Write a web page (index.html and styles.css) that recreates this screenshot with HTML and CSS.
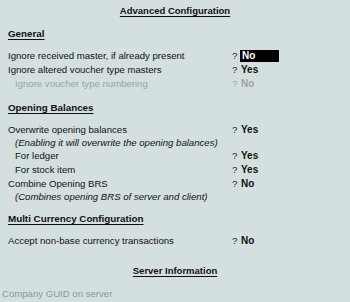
FILE: index.html
```html
<!DOCTYPE html>
<html>
<head>
<meta charset="utf-8">
<link rel="stylesheet" href="styles.css">
</head>
<body>
<div class="page">
  <div class="title"><span>Advanced Configuration</span></div>
  <div class="section"><span>General</span></div>
  <div class="row first"><span class="label">Ignore received master, if already present</span><span class="q">?</span><span class="val sel">No</span></div>
  <div class="row"><span class="label">Ignore altered voucher type masters</span><span class="q">?</span><span class="val">Yes</span></div>
  <div class="row dim"><span class="label indent">Ignore voucher type numbering</span><span class="q">?</span><span class="val">No</span></div>
  <div class="section sec2"><span>Opening Balances</span></div>
  <div class="row first"><span class="label">Overwrite opening balances</span><span class="q">?</span><span class="val">Yes</span></div>
  <div class="note">(Enabling it will overwrite the opening balances)</div>
  <div class="row"><span class="label indent">For ledger</span><span class="q">?</span><span class="val">Yes</span></div>
  <div class="row"><span class="label indent">For stock item</span><span class="q">?</span><span class="val">Yes</span></div>
  <div class="row"><span class="label">Combine Opening BRS</span><span class="q">?</span><span class="val">No</span></div>
  <div class="note">(Combines opening BRS of server and client)</div>
  <div class="section sec3"><span>Multi Currency Configuration</span></div>
  <div class="row first"><span class="label">Accept non-base currency transactions</span><span class="q">?</span><span class="val">No</span></div>
  <div class="title server"><span>Server Information</span></div>
  <div class="guid">Company GUID on server</div>
</div>
</body>
</html>
```
FILE: styles.css
```css
html, body {
  margin: 0;
  padding: 0;
  background: #d4e0df;
}
.page {
  width: 350px;
  height: 302px;
  overflow: hidden;
  font-family: "Liberation Sans", Arial, sans-serif;
  font-size: 9.6px;
  color: #111;
  padding-left: 8px;
  box-sizing: border-box;
}
.title {
  text-align: center;
  font-weight: bold;
  font-size: 9.5px;
  padding-top: 3px;
  height: 15px;
  line-height: 15px;
  padding-right: 8px;
}
.title span, .section span {
  text-decoration: underline;
  text-underline-offset: 2px;
}
.section {
  font-weight: bold;
  font-size: 9.8px;
  margin-top: 8px;
  height: 15px;
  line-height: 15px;
}
.sec2 { margin-top: 9px; }
.sec3 { margin-top: 8px; }
.row {
  display: flex;
  height: 14px;
  line-height: 14px;
  align-items: center;
}
.row.first { margin-top: 8px; }
.label {
  width: 224px;
  flex: none;
  box-sizing: border-box;
}
.indent { padding-left: 7px; }
.q {
  width: 8px;
  flex: none;
  color: #222;
}
.val {
  font-weight: bold;
  padding-left: 1px;
  font-size: 10px;
}
.val.sel {
  background: #000;
  color: #fff;
  width: 37px;
  height: 12px;
  line-height: 12px;
  padding-left: 2px;
}
.dim { color: #9aa4a3; }
.dim .q { color: #9aa4a3; }
.note {
  font-style: italic;
  padding-left: 7px;
  height: 12px;
  line-height: 12px;
}
.server {
  margin-top: 12px;
}
.guid {
  color: #8e9897;
  margin-left: -6px;
  margin-top: 9px;
  line-height: 14px;
}
```
